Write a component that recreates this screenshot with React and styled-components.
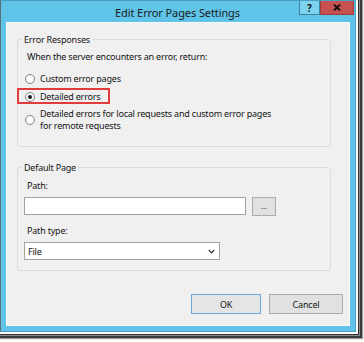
import React from 'react';
import styled, { createGlobalStyle } from 'styled-components';

const Global = createGlobalStyle`
  html, body { margin: 0; padding: 0; background: #ffffff; }
  body { font-family: "Noto Sans", "Open Sans", sans-serif; color: #151515; }
  * { box-sizing: border-box; }
`;

const Page = styled.div`
  width: 364px;
  height: 342px;
  overflow: hidden;
`;

const Window = styled.div`
  width: 356px;
  height: 332px;
  display: flex;
  flex-direction: column;
  background: #60c4e9;
  border: 1px solid #4a9ec2;
  border-left-color: #56707c;
  box-shadow: 0 0 0 2px #ffffff, 0 0 0 3px #2f2f2f, 0 0 0 4px #8c8c8c,
    0 0 0 6px #3a3a3a, 0 0 1px 7px #9a9a9a;
`;

const TitleBar = styled.div`
  height: 21px;
  display: grid;
  grid-template-columns: 1fr auto 1fr;
  padding-right: 1px;
`;

const Title = styled.div`
  grid-column: 2;
  align-self: center;
  font-size: 11px;
  letter-spacing: -0.1px;
  line-height: 21px;
  color: #1b1b1b;
  padding-top: 1px;
`;

const Caption = styled.div`
  grid-column: 3;
  justify-self: end;
  align-self: start;
  display: flex;
`;

const CaptionButton = styled.div`
  height: 14px;
  width: ${(p) => (p.$close ? '34px' : '21px')};
  background: ${(p) => (p.$close ? '#c75050' : '#7dd2f0')};
  border: 1px solid ${(p) => (p.$close ? '#9c3b3b' : '#3a84a6')};
  border-top: none;
  display: flex;
  align-items: center;
  justify-content: center;
  font-size: 10px;
  font-weight: 700;
  color: #151515;
`;

const Frame = styled.div`
  flex: 1;
  display: flex;
  padding: 0 5px 5px;
`;

const Client = styled.div`
  flex: 1;
  display: flex;
  flex-direction: column;
  background: #f0f0f0;
  border: 1px solid #f8fbfc;
`;

const Group = styled.fieldset`
  margin: ${(p) => p.$top} 18px 0 10px;
  padding: 0;
  border: 1px solid #dcdcdc;
  border-radius: 3px;
  min-width: 0;
`;

const Legend = styled.legend`
  margin-left: 4px;
  padding: 0 2px;
  font-size: 9px;
  letter-spacing: -0.2px;
  line-height: 13px;
`;

const GroupBody = styled.div`
  display: flex;
  flex-direction: column;
  padding: ${(p) => p.$pad};
`;

const Text = styled.div`
  font-size: 9px;
  letter-spacing: -0.2px;
  line-height: 12px;
  margin: ${(p) => p.$m || '0'};
  padding-left: 3px;
`;

const RadioRow = styled.div`
  position: relative;
  align-self: flex-start;
  display: flex;
  align-items: center;
  gap: 5px;
  margin-top: ${(p) => p.$mt};
  padding-left: 1px;
  ${(p) =>
    p.$highlight &&
    `
    &::after {
      content: '';
      position: absolute;
      top: -3px;
      bottom: -1px;
      left: -7px;
      right: -10px;
      border: 2px solid #e23b3b;
    }
  `}
`;

const Radio = styled.span`
  flex: none;
  width: 10px;
  height: 10px;
  border-radius: 50%;
  border: 1px solid #858585;
  background: radial-gradient(circle, #ffffff 40%, #ececec 100%);
  display: flex;
  align-items: center;
  justify-content: center;
  &::before {
    content: '';
    width: 4px;
    height: 4px;
    border-radius: 50%;
    background: ${(p) => (p.$checked ? '#1a1a1a' : 'transparent')};
  }
`;

const RadioLabel = styled.span`
  font-size: 9px;
  letter-spacing: -0.2px;
  line-height: 12px;
`;

const FieldRow = styled.div`
  display: flex;
  gap: 6px;
  margin-top: 5px;
`;

const TextBox = styled.div`
  width: 222px;
  height: 18px;
  background: #ffffff;
  border: 1px solid #a3a3a3;
`;

const SmallButton = styled.div`
  width: 24px;
  height: 19px;
  background: #e1e1e1;
  border: 1px solid #acacac;
  display: flex;
  align-items: flex-end;
  justify-content: center;
  padding-bottom: 5px;
  font-size: 8px;
  line-height: 8px;
  color: #333;
`;

const Select = styled.div`
  width: 196px;
  height: 18px;
  margin-top: 5px;
  background: #ffffff;
  border: 1px solid #a3a3a3;
  display: flex;
  align-items: center;
  justify-content: space-between;
  padding: 0 4px 0 3px;
  font-size: 9px;
  letter-spacing: -0.2px;
`;

const Buttons = styled.div`
  display: flex;
  justify-content: flex-end;
  gap: 8px;
  margin-top: 23px;
  padding-right: 6px;
`;

const Button = styled.div`
  width: ${(p) => p.$w};
  height: 20px;
  background: ${(p) => (p.$default ? '#e5e5e5' : '#e1e1e1')};
  border: 1px solid ${(p) => (p.$default ? '#6ea6d8' : '#adadad')};
  display: flex;
  align-items: center;
  justify-content: center;
  font-size: 9px;
  letter-spacing: -0.2px;
  color: #151515;
`;

export default function App() {
  return (
    <Page>
      <Global />
      <Window>
        <TitleBar>
          <Title>Edit Error Pages Settings</Title>
          <Caption>
            <CaptionButton>?</CaptionButton>
            <CaptionButton $close>
              <svg width="8" height="7" viewBox="0 0 8 7">
                <path d="M1 0.5 L7 6.5 M7 0.5 L1 6.5" stroke="#111" strokeWidth="1.8" />
              </svg>
            </CaptionButton>
          </Caption>
        </TitleBar>
        <Frame>
          <Client>
            <Group $top="10px">
              <Legend>Error Responses</Legend>
              <GroupBody $pad="5px 6px 14px 6px">
                <Text>When the server encounters an error, return:</Text>
                <RadioRow $mt="10px">
                  <Radio />
                  <RadioLabel>Custom error pages</RadioLabel>
                </RadioRow>
                <RadioRow $mt="6px" $highlight>
                  <Radio $checked />
                  <RadioLabel>Detailed errors</RadioLabel>
                </RadioRow>
                <RadioRow $mt="5px">
                  <Radio />
                  <RadioLabel>
                    Detailed errors for local requests and custom error pages
                    <br />
                    for remote requests
                  </RadioLabel>
                </RadioRow>
              </GroupBody>
            </Group>
            <Group $top="14px">
              <Legend>Default Page</Legend>
              <GroupBody $pad="6px 6px 10px 6px">
                <Text>Path:</Text>
                <FieldRow>
                  <TextBox />
                  <SmallButton>...</SmallButton>
                </FieldRow>
                <Text $m="9px 0 0">Path type:</Text>
                <Select>
                  <span>File</span>
                  <svg width="7" height="5" viewBox="0 0 7 5">
                    <path d="M0.8 1 L3.5 3.8 L6.2 1" fill="none" stroke="#333" strokeWidth="1.2" />
                  </svg>
                </Select>
              </GroupBody>
            </Group>
            <Buttons>
              <Button $w="70px" $default>OK</Button>
              <Button $w="74px">Cancel</Button>
            </Buttons>
          </Client>
        </Frame>
      </Window>
    </Page>
  );
}
